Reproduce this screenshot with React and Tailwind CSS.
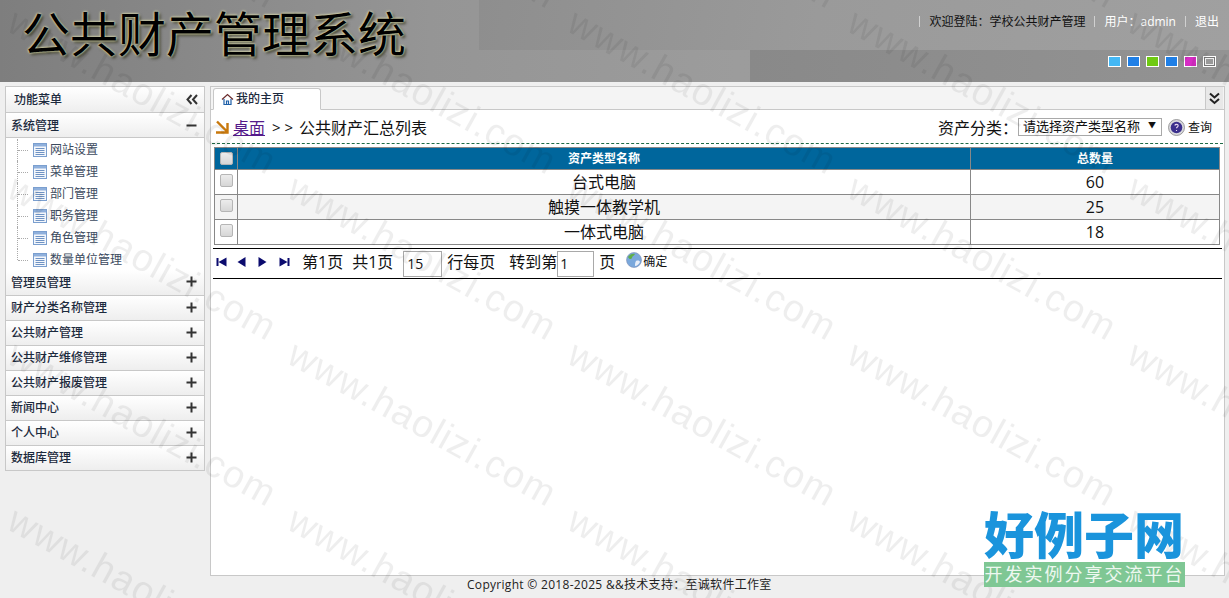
import React from "react";

const FONT = "[font-family:'Open_Sans','Noto_Sans_CJK_SC',sans-serif]";

function TableIcon() {
  return (
    <svg width="14" height="14" viewBox="0 0 14 14" className="shrink-0">
      <rect x="0.5" y="0.5" width="13" height="13" fill="#f4f7fb" stroke="#7b9fcf" />
      <rect x="1" y="1" width="12" height="2.5" fill="#8fb0dc" />
      <path d="M2.5 5.5h9M2.5 7.5h9M2.5 9.5h9M2.5 11.5h9" stroke="#6f93c4" strokeWidth="1" />
    </svg>
  );
}

function Check() {
  return <span className="block w-[13px] h-[13px] rounded-[2px] border border-[#b5b5b5] bg-[linear-gradient(#ececec,#d6d6d6)] mx-auto" />;
}

function Plus() {
  return (
    <svg width="11" height="11" viewBox="0 0 11 11" className="shrink-0 -mt-[2px]">
      <path d="M5.5 0.5v10M0.5 5.5h10" stroke="#333" strokeWidth="2" />
    </svg>
  );
}

function Minus() {
  return (
    <svg width="11" height="11" viewBox="0 0 11 11" className="shrink-0">
      <path d="M0.5 5.5h10" stroke="#333" strokeWidth="2" />
    </svg>
  );
}

function Group({ label, open }) {
  return (
    <div className={`h-[25px] flex items-center justify-between pl-[5px] pr-[7px] bg-[linear-gradient(#ffffff,#eeeeee)] text-[12px] font-medium text-[#1c2a3d] ${open ? "border-b border-[#c8c8c8] pt-[1px]" : "border-t border-[#c8c8c8]"}`}>
      <span>{label}</span>
      {open ? <Minus /> : <Plus />}
    </div>
  );
}

function TreeItem({ label, last }) {
  return (
    <div className="h-[22px] relative flex items-center pl-[27px] gap-[3px] text-[12px] text-[#3b4a5e]">
      <span className={`absolute left-[11px] top-0 border-l border-dotted border-[#aaaaaa] ${last ? "h-[11px]" : "h-[22px]"}`} />
      <span className="absolute left-[12px] top-[11px] w-[10px] border-t border-dotted border-[#aaaaaa]" />
      <TableIcon />
      <span>{label}</span>
    </div>
  );
}

function Tri({ dir }) {
  const d = {
    first: "M0 1h2v8H0zM2 5l8-4.5v9z",
    prev: "M0 5l8-5v10z",
    next: "M8 5L0 0v10z",
    last: "M10 1H8v8h2zM8 5L0 .5v9z",
  }[dir];
  return (
    <svg width="11" height="10" viewBox="0 0 10 10" className="shrink-0">
      <path d={d} fill="#0b0b6e" />
    </svg>
  );
}

const SWATCHES = ["bg-[#44b8f5]", "bg-[#1f7fe6]", "bg-[#6fca12]", "bg-[#1f7fe6]", "bg-[#d62cc4]"];

const ROWS = [
  ["台式电脑", "60", "bg-white"],
  ["触摸一体教学机", "25", "bg-[#f4f4f4]"],
  ["一体式电脑", "18", "bg-white"],
];

function Watermark() {
  const copies = [[0, 0], [0, -166], [-280, 0], [-280, -166]];
  return (
    <svg className="absolute inset-0 pointer-events-none z-10" width="1229" height="598">
      <defs>
        <pattern id="wm" x="3" y="4" width="280" height="166" patternUnits="userSpaceOnUse">
          {copies.map(([dx, dy]) => (
            <text
              key={`${dx}${dy}`}
              x="0"
              y="0"
              transform={`translate(${2 + dx} ${26 + dy}) rotate(29)`}
              fontFamily="'Liberation Sans', sans-serif"
              fontSize="38"
              letterSpacing="1.3"
              fill="#000"
              fillOpacity="0.065"
            >
              www.haolizi.com
            </text>
          ))}
        </pattern>
      </defs>
      <rect width="1229" height="598" fill="url(#wm)" />
    </svg>
  );
}

export default function App() {
  return (
    <div className={`relative w-[1229px] h-[598px] overflow-hidden bg-[#efefef] flex flex-col ${FONT}`}>
      <header className="relative h-[82px] shrink-0 bg-[linear-gradient(90deg,#7e7e7e,#959595_35%,#9c9c9c_60%,#989898)] overflow-hidden">
        <div className="absolute left-[479px] top-0 w-[750px] h-[50px] bg-[linear-gradient(100deg,#8e8e8e,#9a9a9a_45%,#a0a0a0)]" />
        <div className="absolute left-[750px] top-[50px] w-[479px] h-[32px] bg-[linear-gradient(90deg,#898989,#939393)]" />
        <div className="relative flex justify-between h-full">
          <h1 className="pl-[22px] pt-[2px] text-[48px] leading-[64px] font-normal text-black [text-shadow:0_0_2px_#eeeebb,0_0_3px_#d8d8a8,2px_2px_3px_#333322]">
            公共财产管理系统
          </h1>
          <div className="flex flex-col items-end">
            <div className="flex items-center h-[42px] pt-[1px] pr-[10px] text-[12px]">
              <span className="w-px h-[11px] bg-[#d0d0d0] mr-[9px]" />
              <span className="text-[#111]">欢迎登陆：学校公共财产管理</span>
              <span className="w-px h-[11px] bg-[#d0d0d0] mx-[9px]" />
              <span className="text-white">用户：admin</span>
              <span className="w-px h-[11px] bg-[#d0d0d0] mx-[9px]" />
              <span className="text-white">退出</span>
            </div>
            <div className="flex gap-[6px] mt-[14px] pr-[13px]">
              {SWATCHES.map((c, i) => (
                <span key={i} className={`w-[13px] h-[11px] border border-white ${c}`} />
              ))}
              <span className="w-[13px] h-[11px] border border-white bg-[#777] p-[1px] flex">
                <span className="flex-1 border border-[#eee] bg-[#999]" />
              </span>
            </div>
          </div>
        </div>
      </header>

      <div className="flex flex-1 min-h-0 pt-[3px] pl-[5px] pr-[4px] gap-[5px]">
        <aside className="w-[200px] h-[385px] shrink-0 mt-[1px] border border-[#c8c8c8] bg-white flex flex-col">
          <div className="h-[26px] shrink-0 flex items-center justify-between pl-[8px] pr-[6px] border-b border-[#c8c8c8] bg-[linear-gradient(#ffffff,#eeeeee)] text-[12px] font-medium text-[#1c2a3d]">
            <span>功能菜单</span>
            <svg width="12" height="11" viewBox="0 0 12 11">
              <path d="M5.5 1L1.5 5.5l4 4.5M11 1L7 5.5l4 4.5" fill="none" stroke="#333" strokeWidth="2" />
            </svg>
          </div>
          <Group label="系统管理" open />
          <div className="pt-[1px]">
            {["网站设置", "菜单管理", "部门管理", "职务管理", "角色管理"].map((t) => (
              <TreeItem key={t} label={t} />
            ))}
            <TreeItem label="数量单位管理" last />
          </div>
          <div className="-mt-px [&>div:first-child]:border-t-0">
            {["管理员管理", "财产分类名称管理", "公共财产管理", "公共财产维修管理", "公共财产报废管理", "新闻中心", "个人中心", "数据库管理"].map((t) => (
              <Group key={t} label={t} />
            ))}
          </div>
        </aside>

        <main className="flex-1 min-w-0 mt-[1px] border border-[#c8c8c8] bg-white flex flex-col">
          <div className="h-[23px] shrink-0 flex items-end justify-between pl-[2px] pr-[1px] border-b border-[#c8c8c8] bg-[#f4f4f4]">
            <div className="w-[108px] h-[22px] -mb-px flex items-center gap-[2px] pl-[7px] border border-[#c8c8c8] border-b-white rounded-t-[3px] bg-white text-[12px] font-medium text-[#1c2a3d]">
              <svg width="13" height="13" viewBox="0 0 13 13" className="shrink-0">
                <path d="M1 6.5L6.5 1.5 12 6.5" fill="none" stroke="#6b2b2b" strokeWidth="1.2" />
                <path d="M3 6v5.5h7V6M5.5 11.5V8h2v3.5" fill="none" stroke="#1d5fa8" strokeWidth="1.2" />
              </svg>
              <span>我的主页</span>
            </div>
            <div className="w-[18px] h-[22px] flex items-center justify-center border-l border-[#c8c8c8] bg-[#e8e8e8]">
              <svg width="11" height="13" viewBox="0 0 11 13">
                <path d="M1 1.5l4.5 4 4.5-4M1 7l4.5 4 4.5-4" fill="none" stroke="#222" strokeWidth="2" />
              </svg>
            </div>
          </div>

          <div className="flex-1 min-h-0 px-[2px] flex flex-col">
            <div className="h-[34px] shrink-0 flex items-center justify-between border-b border-dashed border-[#1f6b46] pt-[2px] pl-[3px] pr-[11px] -mx-[1px] text-[16px] text-[#111]">
              <div className="flex items-center">
                <svg width="15" height="15" viewBox="0 0 15 15" className="shrink-0 mr-[2px]">
                  <path d="M2 1.5l10 10M12.5 3v9.5H1" fill="none" stroke="#c8780c" strokeWidth="2.4" />
                </svg>
                <span className="ml-[1px] underline text-[#551a8b]">桌面</span>
                <span className="ml-[7px] text-[15px]">&gt; &gt;</span>
                <span className="ml-[6px]">公共财产汇总列表</span>
              </div>
              <div className="flex items-center">
                <span>资产分类：</span>
                <span className="w-[144px] h-[18px] -mt-[2px] flex items-center justify-between border border-[#a9a9a9] bg-white pl-[4px] pr-[5px] text-[13px] leading-none">
                  <span>请选择资产类型名称</span>
                  <span className="text-[8px] -mt-[3px]">▼</span>
                </span>
                <svg width="17" height="17" viewBox="0 0 17 17" className="ml-[6px] shrink-0">
                  <circle cx="8.5" cy="8.5" r="8" fill="#d8d8dc" stroke="#888" strokeWidth="0.8" />
                  <circle cx="8.5" cy="8.5" r="5.8" fill="#3b2f8c" />
                  <path d="M6.8 6.5c.5-1.5 3.4-1.5 3.4.3 0 1.2-1.7 1.3-1.7 2.5M8.5 11v1" fill="none" stroke="#e8d8f0" strokeWidth="1.1" />
                </svg>
                <span className="ml-[3px] text-[12px]">查询</span>
              </div>
            </div>

            <div className="px-[1px] mt-[3px] shrink-0">
              <table className="w-[1006px] border-collapse border border-[#888888] table-fixed">
                <colgroup>
                  <col className="w-[23px]" />
                  <col />
                  <col className="w-[249px]" />
                </colgroup>
                <thead>
                  <tr className="h-[22px] bg-[#00669c] text-white text-[12px] font-bold">
                    <th className="border border-[#888888] p-0"><Check /></th>
                    <th className="border border-[#888888] p-0">资产类型名称</th>
                    <th className="border border-[#888888] p-0">总数量</th>
                  </tr>
                </thead>
                <tbody>
                  {ROWS.map(([n, c, bg]) => (
                    <tr key={n} className={`h-[25px] text-[16px] text-[#111] ${bg}`}>
                      <td className="border border-[#888888] p-0 pb-[3px]"><Check /></td>
                      <td className="border border-[#888888] p-0 text-center">{n}</td>
                      <td className="border border-[#888888] p-0 text-center">{c}</td>
                    </tr>
                  ))}
                </tbody>
              </table>
            </div>

            <div className="h-[31px] mt-[3px] shrink-0 border-y border-black flex items-center pl-[3px] pr-[2px] pb-[4px] text-[16px] text-[#111] w-[1009px]">
              <div className="flex gap-[10px] mr-[12px]">
                <Tri dir="first" />
                <Tri dir="prev" />
                <Tri dir="next" />
                <Tri dir="last" />
              </div>
              <span>第1页</span>
              <span className="ml-[9px]">共1页</span>
              <span className="ml-[10px] w-[39px] h-[26px] mt-[4px] border border-[#a9a9a9] flex items-center pl-[3px] text-[14px]">15</span>
              <span className="ml-[5px]">行每页</span>
              <span className="ml-[14px]">转到第</span>
              <span className="w-[37px] h-[26px] mt-[4px] border border-[#a9a9a9] flex items-center pl-[2px] text-[14px]">1</span>
              <span className="ml-[5px]">页</span>
              <svg width="16" height="16" viewBox="0 0 16 16" className="ml-[11px] -mt-[3px] shrink-0">
                <circle cx="8" cy="8" r="7.5" fill="#7aa8dc" stroke="#7f8fb5" strokeWidth="0.6" />
                <path d="M2 5c2-3 5-4 7-3-1 2-3 2-3 4-1 2-3 1-4-1z" fill="#5fae4a" />
                <path d="M10 9c2-1 4 0 4 1-1 2-3 4-5 4 0-2 0-3 1-5z" fill="#e8eef8" />
              </svg>
              <span className="ml-[1px] text-[12px]">确定</span>
            </div>
          </div>
        </main>
      </div>

      <footer className="h-[22px] shrink-0 flex items-start pl-[467px] text-[12px] tracking-[0.3px] text-[#222]">
        Copyright © 2018-2025 &amp;&amp;技术支持：至诚软件工作室
      </footer>

      <Watermark />

      <div className="absolute left-[984px] top-[503px] w-[201px] z-20 flex flex-col items-stretch">
        <div className="text-[50px] leading-[59px] font-black text-[#1a94dc] whitespace-nowrap [font-family:'Noto_Sans_CJK_SC',serif]">好例子网</div>
        <div className="h-[25px] bg-[#7fc794] text-[#eef8f0] text-[18px] leading-[25px] tracking-[2px] whitespace-nowrap text-center overflow-hidden">开发实例分享交流平台</div>
      </div>
    </div>
  );
}
